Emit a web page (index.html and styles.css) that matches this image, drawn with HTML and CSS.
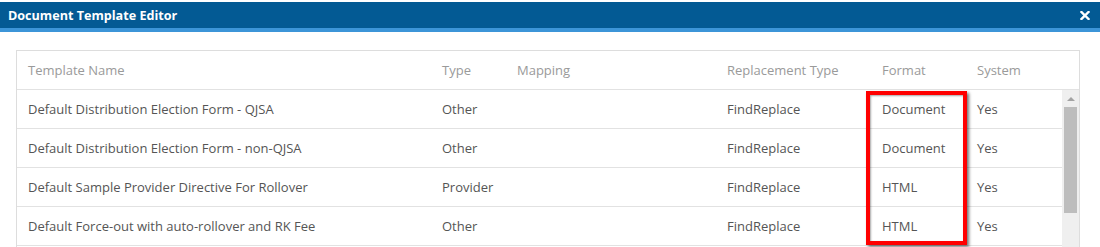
FILE: index.html
```html
<!DOCTYPE html>
<html>
<head>
<meta charset="utf-8">
<link rel="stylesheet" href="styles.css">
</head>
<body>
<div class="dialog">
  <div class="titlebar">
    <span class="title">Document Template Editor</span>
    <svg class="close" width="10" height="9" viewBox="0 0 10 9"><path d="M1.5 1 L8.5 8 M8.5 1 L1.5 8" stroke="#fff" stroke-width="2.4" stroke-linecap="square"/></svg>
  </div>
  <div class="content">
    <div class="table">
      <div class="row head">
        <div class="cell">Template Name</div>
        <div class="cell">Type</div>
        <div class="cell">Mapping</div>
        <div class="cell">Replacement Type</div>
        <div class="cell">Format</div>
        <div class="cell">System</div>
      </div>
      <div class="body">
        <div class="rows">
          <div class="row">
            <div class="cell">Default Distribution Election Form - QJSA</div>
            <div class="cell">Other</div>
            <div class="cell"></div>
            <div class="cell">FindReplace</div>
            <div class="cell">Document</div>
            <div class="cell">Yes</div>
          </div>
          <div class="row">
            <div class="cell">Default Distribution Election Form - non-QJSA</div>
            <div class="cell">Other</div>
            <div class="cell"></div>
            <div class="cell">FindReplace</div>
            <div class="cell">Document</div>
            <div class="cell">Yes</div>
          </div>
          <div class="row">
            <div class="cell">Default Sample Provider Directive For Rollover</div>
            <div class="cell">Provider</div>
            <div class="cell"></div>
            <div class="cell">FindReplace</div>
            <div class="cell">HTML</div>
            <div class="cell">Yes</div>
          </div>
          <div class="row">
            <div class="cell">Default Force-out with auto-rollover and RK Fee</div>
            <div class="cell">Other</div>
            <div class="cell"></div>
            <div class="cell">FindReplace</div>
            <div class="cell">HTML</div>
            <div class="cell">Yes</div>
          </div>
        </div>
        <div class="scrollbar">
          <div class="arrow"></div>
          <div class="thumb"></div>
        </div>
      </div>
      <div class="highlight"></div>
    </div>
  </div>
</div>
</body>
</html>
```

FILE: styles.css
```css
html, body {
  margin: 0;
  padding: 0;
  background: #fff;
}
body {
  font-family: "Open Sans", "Liberation Sans", sans-serif;
  font-size: 13px;
  color: #555;
  width: 1100px;
  height: 247px;
  overflow: hidden;
}
.dialog {
  padding-top: 2px;
}
.titlebar {
  height: 26px;
  background: #035a94;
  border-bottom: 4px solid #3c95d8;
  display: flex;
  align-items: center;
  justify-content: space-between;
  padding: 0 10px 0 8px;
}
.title {
  color: #fff;
  font-weight: bold;
  font-size: 12.6px;
}
.close {
  display: block;
  margin-top: 1px;
}
.content {
  padding: 18px 20px 0 16px;
}
.table {
  position: relative;
  border: 1px solid #ddd;
  border-bottom: none;
}
.row {
  display: grid;
  grid-template-columns: 414px 75px 210px 155px 95px 1fr;
  border-bottom: 1px solid #e2e2e2;
}
.head {
  height: 38px;
  color: #9a9a9a;
}
.cell {
  padding-left: 11px;
  display: flex;
  align-items: center;
  white-space: nowrap;
}
.body {
  display: flex;
}
.rows {
  flex: 1;
}
.rows .row {
  height: 38px;
}
.scrollbar {
  width: 17px;
  height: 160px;
  background: #efefef;
  display: flex;
  flex-direction: column;
  align-items: center;
}
.arrow {
  margin-top: 7px;
  width: 0;
  height: 0;
  border-left: 4px solid transparent;
  border-right: 4px solid transparent;
  border-bottom: 4px solid #a3a3a3;
}
.thumb {
  margin-top: 6px;
  width: 13px;
  height: 106px;
  background: #bdbdbd;
}
.highlight {
  position: absolute;
  left: 849px;
  top: 40px;
  width: 93px;
  height: 146px;
  border: 4px solid #f00;
  box-shadow: 2px 2px 3px rgba(0,0,0,0.55), inset 1px 1px 2px rgba(0,0,0,0.35);
}
```
